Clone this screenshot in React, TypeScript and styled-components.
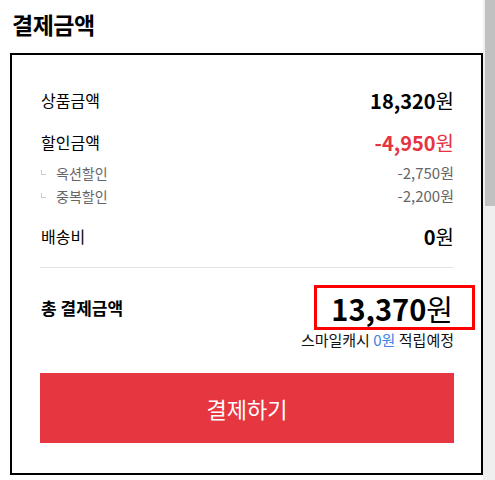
import React from 'react';
import styled, { createGlobalStyle } from 'styled-components';

const GlobalStyle = createGlobalStyle`
  body {
    margin: 0;
    background: #fff;
    font-family: "Noto Sans CJK KR", "Noto Sans", sans-serif;
    color: #000;
  }
`;

const Page = styled.div`
  display: flex;
  height: 480px;
  overflow: hidden;
`;

const Main = styled.main`
  flex: 1;
  padding-left: 10px;
`;

const ScrollTrack = styled.div`
  width: 12px;
  background: #efefef;
  display: flex;
  flex-direction: column;
`;

const ScrollThumb = styled.div`
  margin-left: 2px;
  height: 206px;
  background: #c1c1c1;
`;

const Title = styled.h2`
  margin: 0 0 13px;
  padding: 8px 0 0 2px;
  height: 32px;
  line-height: 32px;
  font-size: 23px;
  font-weight: 700;
  letter-spacing: -0.5px;
`;

const Box = styled.section`
  width: 473px;
  box-sizing: border-box;
  border: 2px solid #000;
  padding: 30px 27px 30px 28px;
  display: flex;
  flex-direction: column;
`;

const Row = styled.div<{ $gap?: number }>`
  display: flex;
  justify-content: space-between;
  align-items: center;
  height: 30px;
  margin-top: ${(p) => p.$gap ?? 0}px;
`;

const Label = styled.span<{ $bold?: boolean }>`
  font-size: ${(p) => (p.$bold ? 17 : 16)}px;
  font-weight: ${(p) => (p.$bold ? 700 : 400)};
  padding-left: 1px;
`;

const Amount = styled.span<{ $red?: boolean; $big?: boolean }>`
  font-size: ${(p) => (p.$big ? 29 : 20)}px;
  font-weight: 700;
  color: ${(p) => (p.$red ? '#e5343f' : '#000')};
  b {
    font-weight: 400;
  }
`;

const SubList = styled.div`
  margin-top: 4px;
  display: flex;
  flex-direction: column;
`;

const SubRow = styled.div`
  display: flex;
  justify-content: space-between;
  align-items: center;
  height: 23px;
  color: #666;
  font-size: 15px;
`;

const SubLabel = styled.span`
  position: relative;
  padding-left: 16px;
  font-size: 14px;
  &::before {
    content: '';
    position: absolute;
    left: 1px;
    top: 7px;
    width: 4px;
    height: 4px;
    border-left: 1px solid #ccc;
    border-bottom: 1px solid #ccc;
  }
`;

const Divider = styled.hr`
  margin: 16px 0 0;
  border: 0;
  height: 1px;
  background: #e5e5e5;
`;

const TotalRow = styled.div`
  display: flex;
  justify-content: space-between;
  align-items: center;
  margin-top: 17px;
`;

const Highlight = styled.div`
  height: 45px;
  box-sizing: border-box;
  border: 3px solid #ff0000;
  padding: 0 19px 0 14px;
  margin-right: -21px;
  display: flex;
  align-items: center;
`;

const Cash = styled.div`
  height: 20px;
  line-height: 20px;
  font-size: 15px;
  text-align: right;
  color: #111;
  span {
    color: #3d85e0;
  }
`;

const PayButton = styled.button`
  margin-top: 23px;
  height: 70px;
  border: 0;
  background: #e63740;
  color: #fff;
  font-family: inherit;
  font-size: 22px;
  cursor: pointer;
`;

export default function App() {
  return (
    <Page>
      <GlobalStyle />
      <Main>
        <Title>결제금액</Title>
        <Box>
          <Row>
            <Label>상품금액</Label>
            <Amount>
              18,320<b>원</b>
            </Amount>
          </Row>
          <Row $gap={12}>
            <Label>할인금액</Label>
            <Amount $red>
              -4,950<b>원</b>
            </Amount>
          </Row>
          <SubList>
            <SubRow>
              <SubLabel>옥션할인</SubLabel>
              <span>-2,750원</span>
            </SubRow>
            <SubRow>
              <SubLabel>중복할인</SubLabel>
              <span>-2,200원</span>
            </SubRow>
          </SubList>
          <Row $gap={14}>
            <Label>배송비</Label>
            <Amount>
              0<b>원</b>
            </Amount>
          </Row>
          <Divider />
          <TotalRow>
            <Label $bold>총 결제금액</Label>
            <Highlight>
              <Amount $big>
                13,370<b>원</b>
              </Amount>
            </Highlight>
          </TotalRow>
          <Cash>
            스마일캐시 <span>0원</span> 적립예정
          </Cash>
          <PayButton>결제하기</PayButton>
        </Box>
      </Main>
      <ScrollTrack>
        <ScrollThumb />
      </ScrollTrack>
    </Page>
  );
}
